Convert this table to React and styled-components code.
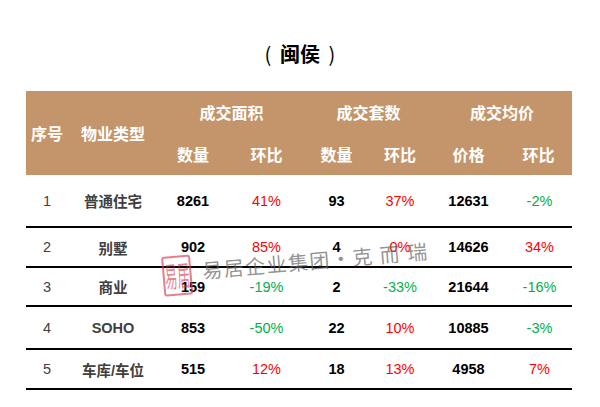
import React from 'react';
import styled, { createGlobalStyle } from 'styled-components';

const GlobalStyle = createGlobalStyle`
  html, body {
    margin: 0;
    padding: 0;
    background: #fff;
  }
  body {
    font-family: "Noto Sans CJK SC", "Noto Sans", sans-serif;
  }
`;

const Page = styled.div`
  width: 600px;
  height: 407px;
  overflow: hidden;
  padding-top: 40px;
  box-sizing: border-box;
`;

const Title = styled.h1`
  margin: 0 0 23px;
  display: flex;
  justify-content: center;
  align-items: center;
  gap: 4px;
  font-size: 20px;
  line-height: 28px;
  font-weight: 700;
  color: #000;
`;

const Paren = styled.span`
  font-weight: 400;
  width: 16px;
  text-align: center;
`;

const Board = styled.div`
  position: relative;
  width: 546px;
  margin-left: 26px;
`;

const cols = '42px 90px 70px 77px 63px 64px 73px 67px';

const Head = styled.div`
  display: grid;
  grid-template-columns: ${cols};
  grid-template-rows: 42px 42px;
  background: #c4956a;
  color: #fff;
  font-size: 16px;
  font-weight: 700;
`;

const HeadCell = styled.div`
  display: flex;
  align-items: center;
  justify-content: center;
  white-space: nowrap;
  grid-row: ${({ $row }) => $row || 'auto'};
  grid-column: ${({ $col }) => $col || 'auto'};
`;

const Row = styled.div`
  display: grid;
  grid-template-columns: ${cols};
  height: ${({ $h }) => $h}px;
  box-sizing: border-box;
  border-bottom: 2px solid #000;
  align-items: center;
  font-family: "Liberation Sans", "Noto Sans CJK SC", sans-serif;
  font-size: 14.5px;
`;

const Cell = styled.div`
  text-align: center;
  white-space: nowrap;
  font-weight: ${({ $bold }) => ($bold ? 700 : 400)};
  color: ${({ $tone }) =>
    $tone === 'up' ? '#ff0000' : $tone === 'down' ? '#00b050' : $tone === 'muted' ? '#404040' : '#000'};
  padding-left: ${({ $shift }) => $shift || 0}px;
`;

const Watermark = styled.div`
  position: absolute;
  left: 135px;
  top: 166px;
  display: flex;
  align-items: flex-start;
  gap: 11px;
  transform: rotate(-5deg);
  transform-origin: left top;
  pointer-events: none;
`;

const Seal = styled.div`
  width: 25px;
  height: 36px;
  border: 2px solid rgba(214, 60, 80, 0.65);
  border-radius: 3px;
  display: flex;
  align-items: center;
  justify-content: center;
  color: rgba(214, 60, 80, 0.65);
  font-size: 12.5px;
  line-height: 1;
`;

const SealChar = styled.span`
  display: inline-block;
  transform: scaleY(2.3);
`;

const MarkText = styled.span`
  font-size: 20px;
  line-height: 30px;
  color: rgba(100, 100, 100, 0.7);
  letter-spacing: 1.5px;
  font-weight: 400;
  margin-top: 2px;
`;

const MarkGap = styled.span`
  display: inline-block;
  width: ${({ $w }) => $w}px;
`;

const rows = [
  { h: 53, no: '1', type: '普通住宅', a: '8261', ar: '41%', b: '93', br: '37%', c: '12631', cr: '-2%' },
  { h: 40, no: '2', type: '别墅', a: '902', ar: '85%', b: '4', br: '0%', c: '14626', cr: '34%' },
  { h: 39, no: '3', type: '商业', a: '159', ar: '-19%', b: '2', br: '-33%', c: '21644', cr: '-16%' },
  { h: 43, no: '4', type: 'SOHO', a: '853', ar: '-50%', b: '22', br: '10%', c: '10885', cr: '-3%' },
  { h: 40, no: '5', type: '车库/车位', a: '515', ar: '12%', b: '18', br: '13%', c: '4958', cr: '7%' },
];

const tone = (v) => (v.startsWith('-') ? 'down' : 'up');

export default function App() {
  return (
    <Page>
      <GlobalStyle />
      <Title>
        <Paren>(</Paren>
        <span>闽侯</span>
        <Paren>)</Paren>
      </Title>
      <Board>
        <Head>
          <HeadCell $row="1 / 3" $col="1">序号</HeadCell>
          <HeadCell $row="1 / 3" $col="2">物业类型</HeadCell>
          <HeadCell $row="1" $col="3 / 5">成交面积</HeadCell>
          <HeadCell $row="1" $col="5 / 7">成交套数</HeadCell>
          <HeadCell $row="1" $col="7 / 9">成交均价</HeadCell>
          <HeadCell $row="2" $col="3">数量</HeadCell>
          <HeadCell $row="2" $col="4">环比</HeadCell>
          <HeadCell $row="2" $col="5">数量</HeadCell>
          <HeadCell $row="2" $col="6">环比</HeadCell>
          <HeadCell $row="2" $col="7">价格</HeadCell>
          <HeadCell $row="2" $col="8">环比</HeadCell>
        </Head>
        {rows.map((r) => (
          <Row key={r.no} $h={r.h}>
            <Cell $tone="muted">{r.no}</Cell>
            <Cell $tone="muted" $bold>{r.type}</Cell>
            <Cell $bold>{r.a}</Cell>
            <Cell $tone={tone(r.ar)}>{r.ar}</Cell>
            <Cell $bold>{r.b}</Cell>
            <Cell $tone={tone(r.br)}>{r.br}</Cell>
            <Cell $bold>{r.c}</Cell>
            <Cell $tone={tone(r.cr)} $shift={2}>{r.cr}</Cell>
          </Row>
        ))}
        <Watermark>
          <Seal>
            <SealChar>易</SealChar>
            <SealChar>居</SealChar>
          </Seal>
          <MarkText>
            易居企业集团·克<MarkGap $w={6} />而<MarkGap $w={6} />瑞
          </MarkText>
        </Watermark>
      </Board>
    </Page>
  );
}
